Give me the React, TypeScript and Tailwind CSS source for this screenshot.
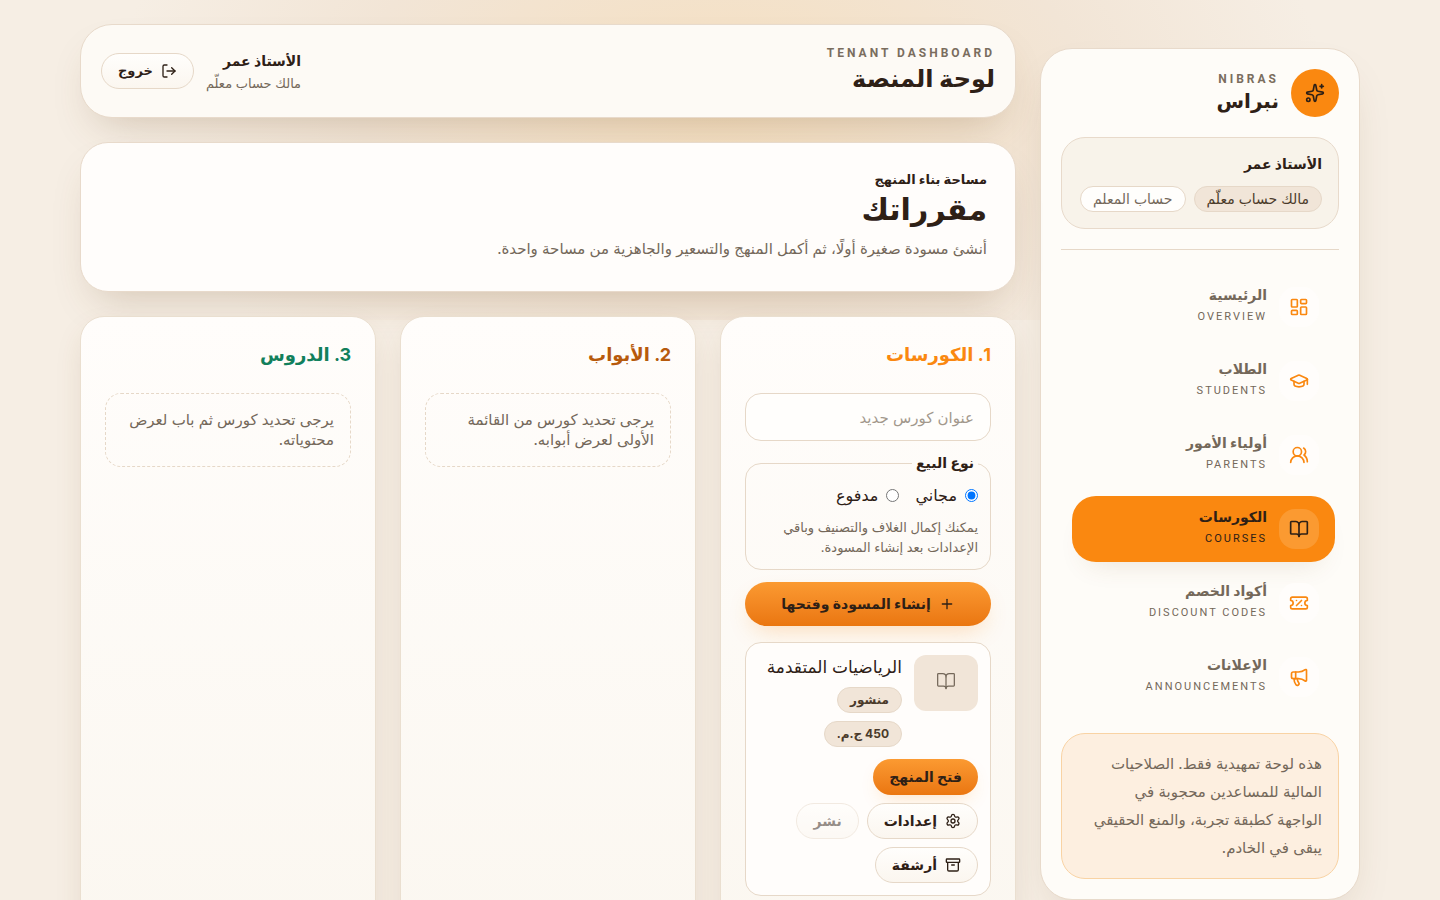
import React from "react";
import {
  Archive,
  BookOpen,
  GraduationCap,
  LayoutDashboard,
  LogOut,
  Megaphone,
  Plus,
  Settings,
  Sparkles,
  TicketPercent,
  UsersRound,
} from "lucide-react";

const navItems = [
  { title: "الرئيسية", label: "OVERVIEW", icon: LayoutDashboard },
  { title: "الطلاب", label: "STUDENTS", icon: GraduationCap },
  { title: "أولياء الأمور", label: "PARENTS", icon: UsersRound },
  { title: "الكورسات", label: "COURSES", icon: BookOpen, active: true },
  { title: "أكواد الخصم", label: "DISCOUNT CODES", icon: TicketPercent },
  { title: "الإعلانات", label: "ANNOUNCEMENTS", icon: Megaphone },
];

const Sidebar = () => {
  return (
    <aside className="mt-6 flex h-[calc(100vh-48px)] min-h-[852px] w-80 shrink-0 flex-col rounded-[32px] border border-[#e8dacb] bg-[#fefcf8] p-5 shadow-[0_20px_48px_-20px_rgba(90,60,25,0.22)]">
      <div className="flex items-center gap-3">
        <div className="flex h-12 w-12 items-center justify-center rounded-full bg-[#fa8810]">
          <Sparkles size={20} />
        </div>
        <div>
          <p dir="ltr" className="text-right font-[Roboto] text-xs font-bold leading-4 tracking-[3px] text-[#7a6d5e]">
            NIBRAS
          </p>
          <p className="text-xl font-bold leading-7">نبراس</p>
        </div>
      </div>

      <div className="mt-5 rounded-3xl border border-[#e8dacb] bg-[#f8f3ea] p-4 pt-3">
        <p className="text-sm font-bold leading-7">الأستاذ عمر</p>
        <div className="mt-2 flex gap-2">
          <span className="flex h-[26px] items-center whitespace-nowrap rounded-full border border-[#e6d8c8] bg-[#f1e5d8] px-3 text-sm leading-5 text-[#4b3a2a]">
            مالك حساب معلّم
          </span>
          <span className="flex h-[26px] items-center whitespace-nowrap rounded-full border border-[#e6d8c8] bg-[#fffefc] px-3 text-sm leading-5 text-[#74685a]">
            حساب المعلم
          </span>
        </div>
      </div>

      <nav className="mt-5 flex flex-1 flex-col gap-2 border-t border-[#e6d8c8] pl-[11px] pr-1 pt-6">
        {navItems.map(({ title, label, icon: Icon, active }) => (
          <a
            key={label}
            href="#"
            className={
              active
                ? "flex h-[66px] items-center gap-3 rounded-3xl bg-[#fa8810] px-4 text-[#2e2016] shadow-[0_16px_28px_-16px_rgba(120,80,30,0.16)]"
                : "flex h-[66px] items-center gap-3 rounded-3xl px-4 text-[#74685a]"
            }
          >
            <span
              className={
                active
                  ? "flex h-10 w-10 items-center justify-center rounded-2xl bg-[#fb9a31]"
                  : "flex h-10 w-10 items-center justify-center rounded-2xl bg-[#fffdfb] text-[#fa8810]"
              }
            >
              <Icon size={20} />
            </span>
            <span className="flex flex-col">
              <span className="text-sm font-bold leading-5">{title}</span>
              <span dir="ltr" className="text-right font-[Roboto] text-[11px] leading-6 tracking-[2px]">
                {label}
              </span>
            </span>
          </a>
        ))}
      </nav>

      <p className="rounded-3xl border border-[#f9d3a4] bg-[#fdefe0] py-4 pl-3 pr-4 text-[15px] leading-7 text-[#74685a]">
        هذه لوحة تمهيدية فقط. الصلاحيات المالية للمساعدين محجوبة في
        <br />
        الواجهة كطبقة تجربة، والمنع الحقيقي يبقى في الخادم.
      </p>
    </aside>
  );
};

const Header = () => {
  return (
    <header className="flex h-[94px] items-center justify-between rounded-[32px] border border-[#e8dacb] bg-[#fdfaf5] px-5 shadow-[0_20px_40px_-16px_rgba(110,75,35,0.26)]">
      <div>
        <p dir="ltr" className="text-right font-[Roboto] text-xs font-bold leading-4 tracking-[3px] text-[#7a6d5e]">
          TENANT DASHBOARD
        </p>
        <p className="text-2xl font-bold leading-9">لوحة المنصة</p>
      </div>
      <div className="flex items-center gap-3">
        <div>
          <p className="text-sm font-bold leading-6">الأستاذ عمر</p>
          <p className="text-[13px] leading-5 text-[#74685a]">مالك حساب معلّم</p>
        </div>
        <button className="flex h-9 items-center gap-2 rounded-full border border-[#e6d8c8] bg-linear-to-b from-[#fffefc] to-[#fbf6ef] px-4 text-[13px] font-bold">
          <LogOut size={16} />
          خروج
        </button>
      </div>
    </header>
  );
};

const Hero = () => {
  return (
    <section className="h-[150px] rounded-[28px] border border-[#e8dacb] bg-[#fffdfb] px-7 pt-6 shadow-[0_20px_40px_-16px_rgba(110,75,35,0.26)]">
      <p className="text-[13px] font-bold leading-6">مساحة بناء المنهج</p>
      <h1 className="text-3xl font-bold leading-9">مقرراتك</h1>
      <p className="mt-2 text-[15px] leading-7 text-[#74685a]">
        أنشئ مسودة صغيرة أولًا، ثم أكمل المنهج والتسعير والجاهزية من مساحة واحدة.
      </p>
    </section>
  );
};

const CourseCard = () => {
  const outline =
    "flex h-9 items-center gap-2 rounded-full border border-[#e6d8c8] bg-linear-to-b from-[#fffefc] to-[#fbf6ef] px-4 text-sm font-bold";
  return (
    <article className="mt-4 rounded-2xl border border-[#e6d8c8] bg-[#fffdfb] p-3">
      <div className="flex gap-3">
        <div className="flex h-14 w-16 shrink-0 items-center justify-center rounded-xl bg-[#f1e5d8] pb-1 text-[#74685a]">
          <BookOpen size={20} strokeWidth={1.5} />
        </div>
        <div className="flex flex-col items-start gap-2">
          <h3 className="whitespace-nowrap text-[17px] leading-6">الرياضيات المتقدمة</h3>
          <span className="flex h-[26px] items-center rounded-full border border-[#e6d8c8] bg-[#f1e5d8] px-3 text-xs font-bold text-[#4b3a2a]">
            منشور
          </span>
          <span className="flex h-[26px] items-center rounded-full border border-[#e6d8c8] bg-[#f1e5d8] px-3 text-xs font-bold text-[#4b3a2a]">
            450 ج.م.
          </span>
        </div>
      </div>
      <div className="mt-3 flex flex-wrap gap-2">
        <button className="ml-16 flex h-9 items-center rounded-full bg-linear-to-b from-[#fb9a31] to-[#ea760f] px-4 text-sm font-bold shadow-[0_8px_20px_-8px_rgba(250,136,16,0.3)]">
          فتح المنهج
        </button>
        <button className={outline}>
          <Settings size={16} />
          إعدادات
        </button>
        <button disabled className={outline + " opacity-50"}>
          نشر
        </button>
        <button className={outline}>
          <Archive size={16} />
          أرشفة
        </button>
      </div>
    </article>
  );
};

const column =
  "min-h-[640px] min-w-0 flex-1 rounded-3xl border border-[#eadfd0] bg-linear-to-b from-[#fffdfb] to-[#fbf7f0] p-6 shadow-[0_12px_32px_-8px_rgba(110,75,35,0.18)]";
const emptyNote =
  "mt-6 rounded-2xl border border-dashed border-[#e6d8c8] p-4 text-[15px] leading-5 text-[#74685a]";

const Board = () => {
  return (
    <div className="flex gap-6">
      <section className={column}>
        <h2 className="text-lg font-bold leading-7 text-[#fa8810]">1. الكورسات</h2>
        <form>
          <input
            type="text"
            aria-label="عنوان كورس جديد"
            placeholder="عنوان كورس جديد"
            className="mt-6 h-12 w-full rounded-2xl border border-[#e6d8c8] bg-[#fffefc] px-4 text-[15px] placeholder:text-[#a2988c]"
          />
          <fieldset className="mt-3 rounded-2xl border border-[#e6d8c8] px-3 pb-3">
            <legend className="px-1 text-sm font-bold leading-5">نوع البيع</legend>
            <div className="mt-2.5 flex gap-4">
              <label className="flex items-center gap-2 text-base leading-6">
                <input type="radio" name="sale" defaultChecked />
                مجاني
              </label>
              <label className="flex items-center gap-2 text-base leading-6">
                <input type="radio" name="sale" />
                مدفوع
              </label>
            </div>
            <p className="mt-2.5 text-[13px] leading-5 text-[#74685a]">
              يمكنك إكمال الغلاف والتصنيف وباقي الإعدادات بعد إنشاء المسودة.
            </p>
          </fieldset>
          <button
            type="button"
            className="mt-3 flex h-11 w-full items-center justify-center gap-2 rounded-full bg-linear-to-b from-[#fb9a31] to-[#ea760f] text-sm font-bold shadow-[0_10px_24px_-8px_rgba(250,136,16,0.3)]"
          >
            <Plus size={16} />
            إنشاء المسودة وفتحها
          </button>
        </form>
        <CourseCard />
      </section>
      <section className={column}>
        <h2 className="text-lg font-bold leading-7 text-[#b75a0c]">2. الأبواب</h2>
        <p className={emptyNote}>يرجى تحديد كورس من القائمة الأولى لعرض أبوابه.</p>
      </section>
      <section className={column}>
        <h2 className="text-lg font-bold leading-7 text-[#12805c]">3. الدروس</h2>
        <p className={emptyNote}>يرجى تحديد كورس ثم باب لعرض محتوياته.</p>
      </section>
    </div>
  );
};

const App = () => {
  return (
    <div
      dir="rtl"
      className="min-h-screen bg-[#f6eee4] bg-[radial-gradient(ellipse_42%_110%_at_50%_30%,#f5dfc0_0%,#f2e5d6_60%,#f6eee4_100%)] bg-[length:100%_320px] bg-no-repeat font-['Inter','DejaVu_Sans',sans-serif] text-[#2e2016]"
    >
      <div className="mx-auto flex max-w-[1328px] items-start gap-6 px-6 py-6">
        <Sidebar />
        <main className="flex min-w-0 flex-1 flex-col gap-6">
          <Header />
          <Hero />
          <Board />
        </main>
      </div>
    </div>
  );
};

export default App;
